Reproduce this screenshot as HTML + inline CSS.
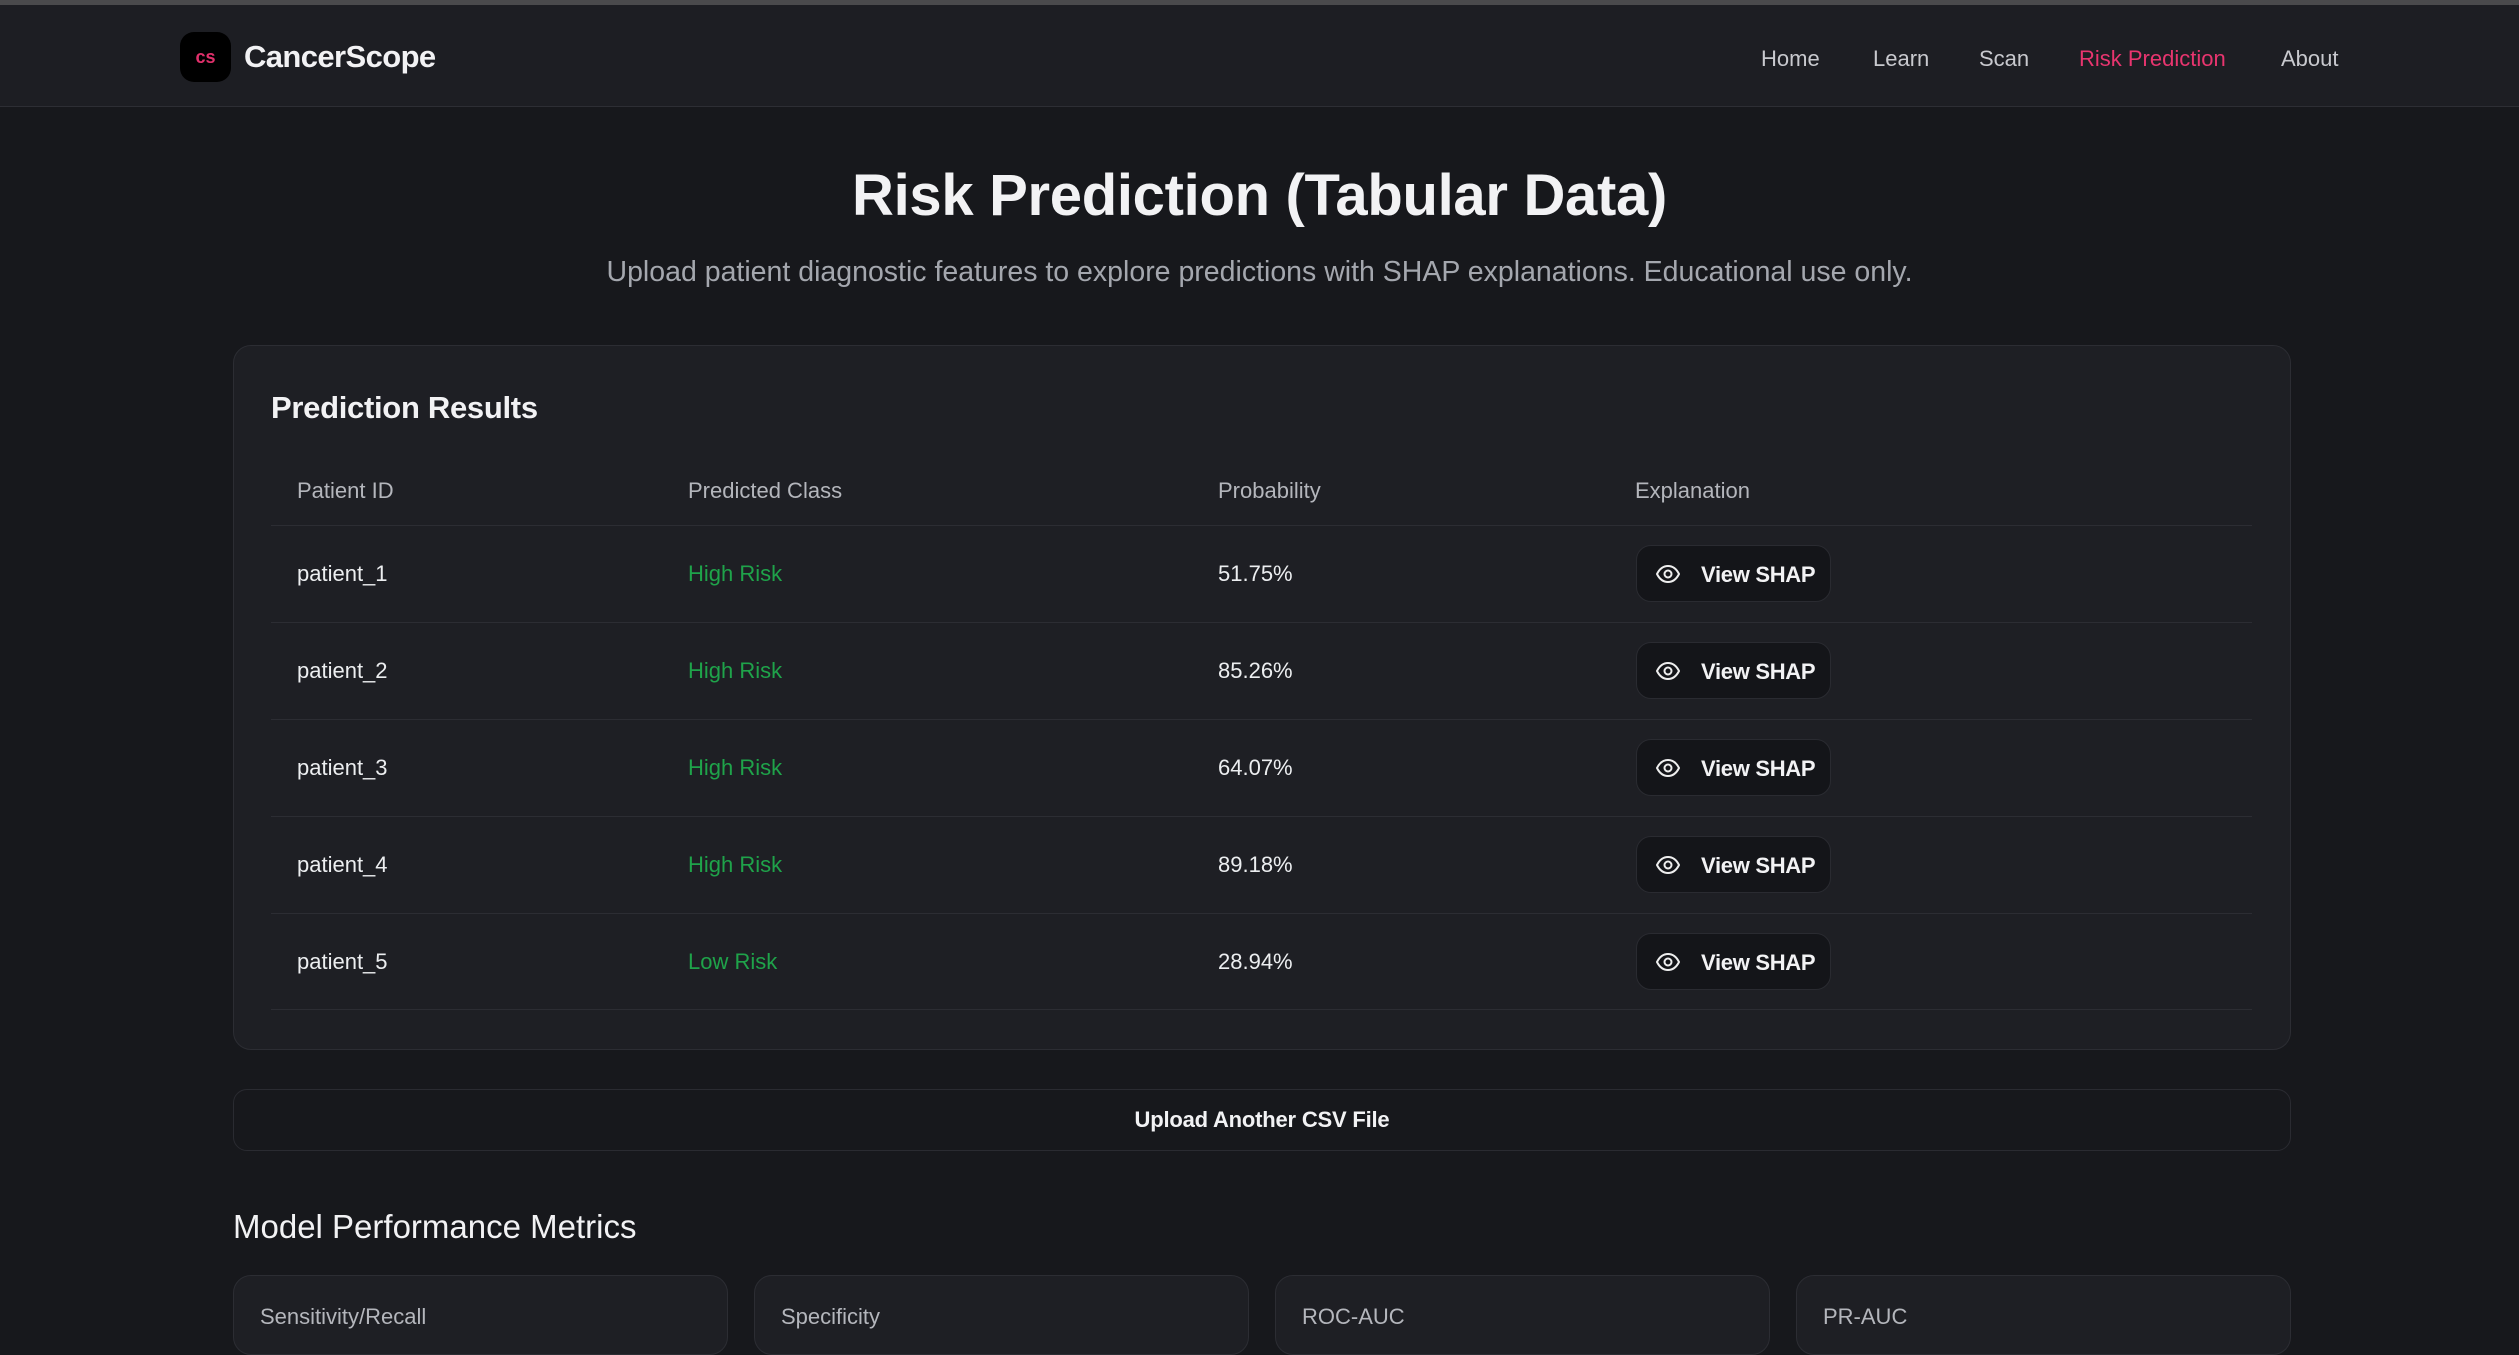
<!DOCTYPE html>
<html><head><meta charset="utf-8"><style>
*{box-sizing:border-box;margin:0;padding:0}
body{width:2519px;height:1326px;overflow:hidden;background:#17181c;font-family:"Liberation Sans",sans-serif;color:#f2f2f4;position:relative}
.topbar{position:absolute;left:0;top:0;width:2519px;height:5px;background:#4a4a4c}
.nav{position:absolute;left:0;top:5px;width:2519px;height:102px;background:#1d1e23;border-bottom:1px solid #2d2e34}
.logo{position:absolute;left:180px;top:27px;width:51px;height:50px;background:#000;border-radius:14px;color:#e0306b;font-weight:bold;font-size:18px;text-align:center;line-height:50px}
.brand{position:absolute;left:244px;top:34px;font-size:31px;font-weight:bold;letter-spacing:-0.6px}
.nl{position:absolute;top:41px;font-size:22px;color:#c8c9ce}
h1{position:absolute;left:0;width:2519px;text-align:center;top:162px;font-size:58px;font-weight:bold;letter-spacing:-0.3px}
.sub{position:absolute;left:0;width:2519px;text-align:center;top:256px;font-size:28.5px;color:#a4a7ae}
.card{position:absolute;left:233px;top:345px;width:2058px;height:705px;background:#1e1f24;border:1px solid #2c2d33;border-radius:18px}
.ct{position:absolute;left:271px;top:390px;font-size:31px;font-weight:bold;letter-spacing:-0.3px}
.th{position:absolute;top:478px;font-size:22px;color:#b4b6bc}
.line{position:absolute;left:271px;width:1981px;height:1px;background:#2c2d33}
.cell{position:absolute;font-size:22px;color:#eceef0}
.g{color:#1fa34a}
.btn{position:absolute;left:1636px;width:195px;height:57px;background:#141519;border:1px solid #2a2b31;border-radius:15px;font-size:22px;font-weight:bold}
.btn svg{position:absolute;left:19px;top:18px}
.btn span{position:absolute;left:64px;top:16px;letter-spacing:-0.3px}
.up{position:absolute;left:233px;top:1089px;width:2058px;height:62px;border:1px solid #2a2b31;border-radius:14px;background:#17181c;text-align:center;line-height:60px;font-size:22px;font-weight:bold;letter-spacing:-0.2px}
.mt{position:absolute;left:233px;top:1208px;font-size:33px}
.mc{position:absolute;top:1275px;width:495px;height:80px;background:#1e1f24;border:1px solid #2c2d33;border-radius:18px}
.mc span{position:absolute;left:26px;top:28px;font-size:22px;color:#b4b6bc}
</style></head><body>
<div class="topbar"></div>
<div class="nav">
<div class="logo">cs</div>
<div class="brand">CancerScope</div>
<div class="nl" style="left:1761px">Home</div>
<div class="nl" style="left:1873px">Learn</div>
<div class="nl" style="left:1979px">Scan</div>
<div class="nl" style="left:2079px;color:#e8356f">Risk Prediction</div>
<div class="nl" style="left:2281px">About</div>
</div>
<h1>Risk Prediction (Tabular Data)</h1>
<div class="sub">Upload patient diagnostic features to explore predictions with SHAP explanations. Educational use only.</div>
<div class="card"></div>
<div class="ct">Prediction Results</div>
<div class="th" style="left:297px">Patient ID</div>
<div class="th" style="left:688px">Predicted Class</div>
<div class="th" style="left:1218px">Probability</div>
<div class="th" style="left:1635px">Explanation</div>
<div class="line" style="top:525px"></div>

<div class="cell" style="left:297px;top:561px">patient_1</div><div class="cell g" style="left:688px;top:561px">High Risk</div><div class="cell" style="left:1218px;top:561px">51.75%</div>
<div class="btn" style="top:545px"><svg width="24" height="20" viewBox="0 0 24 20" fill="none" stroke="#eee" stroke-width="2"><path d="M1 10C4 4 8 2 12 2s8 2 11 8c-3 6-7 8-11 8S4 16 1 10z"/><circle cx="12" cy="10" r="3.5"/></svg><span>View SHAP</span></div>
<div class="line" style="top:622px"></div>

<div class="cell" style="left:297px;top:658px">patient_2</div><div class="cell g" style="left:688px;top:658px">High Risk</div><div class="cell" style="left:1218px;top:658px">85.26%</div>
<div class="btn" style="top:642px"><svg width="24" height="20" viewBox="0 0 24 20" fill="none" stroke="#eee" stroke-width="2"><path d="M1 10C4 4 8 2 12 2s8 2 11 8c-3 6-7 8-11 8S4 16 1 10z"/><circle cx="12" cy="10" r="3.5"/></svg><span>View SHAP</span></div>
<div class="line" style="top:719px"></div>

<div class="cell" style="left:297px;top:755px">patient_3</div><div class="cell g" style="left:688px;top:755px">High Risk</div><div class="cell" style="left:1218px;top:755px">64.07%</div>
<div class="btn" style="top:739px"><svg width="24" height="20" viewBox="0 0 24 20" fill="none" stroke="#eee" stroke-width="2"><path d="M1 10C4 4 8 2 12 2s8 2 11 8c-3 6-7 8-11 8S4 16 1 10z"/><circle cx="12" cy="10" r="3.5"/></svg><span>View SHAP</span></div>
<div class="line" style="top:816px"></div>

<div class="cell" style="left:297px;top:852px">patient_4</div><div class="cell g" style="left:688px;top:852px">High Risk</div><div class="cell" style="left:1218px;top:852px">89.18%</div>
<div class="btn" style="top:836px"><svg width="24" height="20" viewBox="0 0 24 20" fill="none" stroke="#eee" stroke-width="2"><path d="M1 10C4 4 8 2 12 2s8 2 11 8c-3 6-7 8-11 8S4 16 1 10z"/><circle cx="12" cy="10" r="3.5"/></svg><span>View SHAP</span></div>
<div class="line" style="top:913px"></div>

<div class="cell" style="left:297px;top:949px">patient_5</div><div class="cell g" style="left:688px;top:949px">Low Risk</div><div class="cell" style="left:1218px;top:949px">28.94%</div>
<div class="btn" style="top:933px"><svg width="24" height="20" viewBox="0 0 24 20" fill="none" stroke="#eee" stroke-width="2"><path d="M1 10C4 4 8 2 12 2s8 2 11 8c-3 6-7 8-11 8S4 16 1 10z"/><circle cx="12" cy="10" r="3.5"/></svg><span>View SHAP</span></div>
<div class="line" style="top:1009px"></div>

<div class="up">Upload Another CSV File</div>
<div class="mt">Model Performance Metrics</div>
<div class="mc" style="left:233px"><span>Sensitivity/Recall</span></div>
<div class="mc" style="left:754px"><span>Specificity</span></div>
<div class="mc" style="left:1275px"><span>ROC-AUC</span></div>
<div class="mc" style="left:1796px"><span>PR-AUC</span></div>
</body></html>
